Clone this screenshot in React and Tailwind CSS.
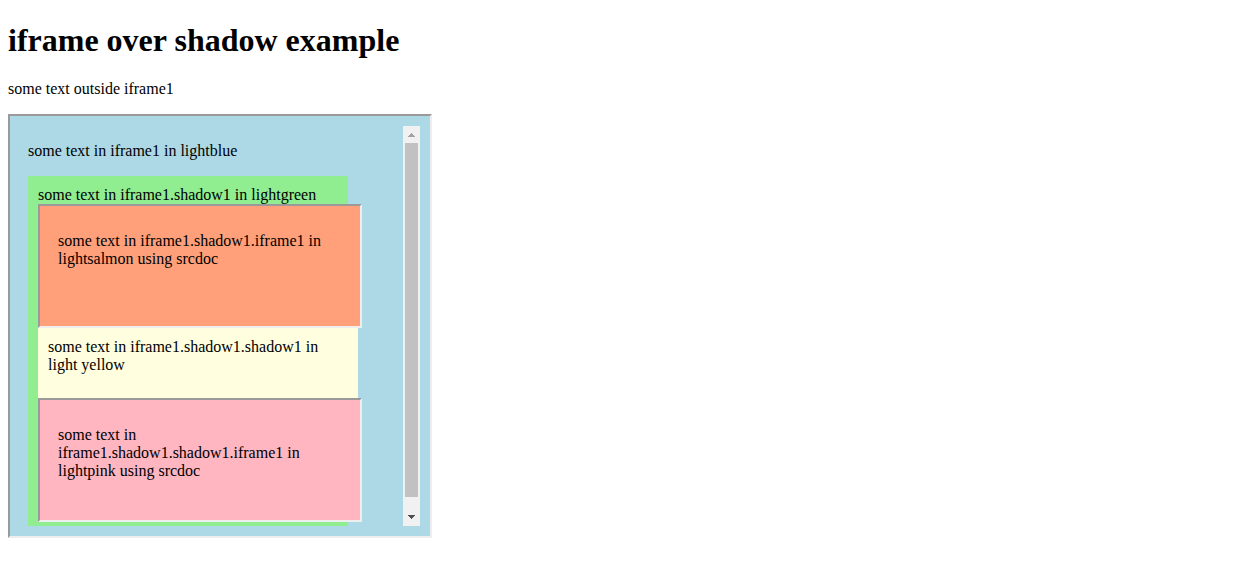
function Frame({ className, children }) {
  return (
    <section
      className={`border-2 border-t-[#9a9a9a] border-l-[#9a9a9a] border-r-[#eeeeee] border-b-[#eeeeee] p-2.5 ${className}`}
    >
      {children}
    </section>
  );
}

function ScrollBar() {
  return (
    <div className="flex w-[17px] shrink-0 flex-col bg-[#f1f1f1]">
      <button type="button" aria-label="Scroll up" disabled className="flex h-[17px] items-end justify-center pb-1.5">
        <svg width="7" height="4" viewBox="0 0 7 4" shapeRendering="crispEdges" fill="#a3a3a3" aria-hidden="true">
          <path d="M3 0h1v1h1v1h1v1h1v1H0V3h1V2h1V1h1z" />
        </svg>
      </button>
      <div className="flex grow flex-col px-0.5 pb-3">
        <div className="grow bg-[#c1c1c1]" />
      </div>
      <button type="button" aria-label="Scroll down" className="flex h-[17px] items-start justify-center pt-1.5">
        <svg width="7" height="4" viewBox="0 0 7 4" shapeRendering="crispEdges" fill="#505050" aria-hidden="true">
          <path d="M0 0h7v1H6v1H5v1H4v1H3V3H2V2H1V1H0z" />
        </svg>
      </button>
    </div>
  );
}

export default function App() {
  return (
    <main className="px-2 pt-[22px] pb-2 font-['Liberation_Serif','Times_New_Roman',serif] text-base leading-[18px] text-black">
      <h1 className="text-[32px] leading-9 font-bold">iframe over shadow example</h1>
      <p className="mt-[22px] mb-4">some text outside iframe1</p>

      <Frame className="w-[424px] bg-[#add8e6]">
        <div className="flex h-[400px] overflow-hidden">
          <div className="grow px-2 pt-4">
            <p className="mb-4">some text in iframe1 in lightblue</p>
            <div className="h-[350px] w-80 bg-[#90ee90] p-2.5">
              <p>some text in iframe1.shadow1 in lightgreen</p>
              <Frame className="h-[124px] w-[324px] bg-[#ffa07a]">
                <p className="px-2 py-4">some text in iframe1.shadow1.iframe1 in lightsalmon using srcdoc</p>
              </Frame>
              <div className="w-80 bg-[#ffffe0] px-2.5 pt-2.5 pb-6">
                <p>some text in iframe1.shadow1.shadow1 in light yellow</p>
              </div>
              <Frame className="h-[124px] w-[324px] bg-[#ffb6c1]">
                <p className="px-2 py-4">
                  some text in iframe1.shadow1.shadow1.iframe1 in lightpink using srcdoc
                </p>
              </Frame>
            </div>
          </div>
          <ScrollBar />
        </div>
      </Frame>
    </main>
  );
}
